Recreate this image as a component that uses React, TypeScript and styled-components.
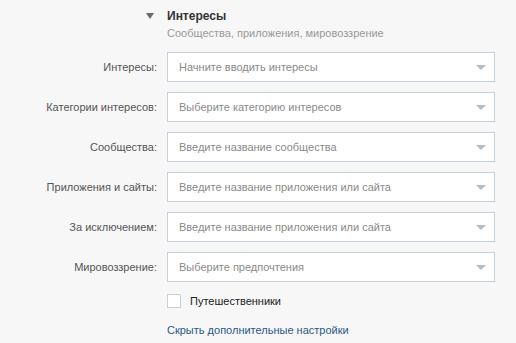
import * as React from 'react';
import styled, {createGlobalStyle} from 'styled-components';

const GlobalStyle = createGlobalStyle`
  html, body {
    margin: 0;
    padding: 0;
    background: #f7f7f7;
  }
  body {
    font-family: "Liberation Sans", Arial, sans-serif;
    font-size: 11px;
  }
`;

const Page = styled.div`
  width: 516px;
  height: 343px;
  padding-top: 8px;
  box-sizing: border-box;
  overflow: hidden;
`;

const Form = styled.div`
  display: grid;
  grid-template-columns: 157px 328px;
  column-gap: 10px;
  row-gap: 10px;
  align-items: center;
`;

const Header = styled.div`
  display: grid;
  grid-template-columns: 157px 328px;
  column-gap: 10px;
  margin-bottom: 11px;
`;

const Toggle = styled.div`
  justify-self: end;
  margin-right: 3px;
  margin-top: 5px;
  width: 0;
  height: 0;
  border-left: 4px solid transparent;
  border-right: 4px solid transparent;
  border-top: 6px solid #6b6b6b;
`;

const Title = styled.div`
  font-weight: bold;
  font-size: 12px;
  line-height: 16px;
  color: #333;
`;

const Subtitle = styled.div`
  color: #999;
  line-height: 16px;
  margin-top: 1px;
`;

const Label = styled.div`
  text-align: right;
  color: #555;
  line-height: 30px;
`;

const Select = styled.div`
  height: 30px;
  box-sizing: border-box;
  background: #fff;
  border: 1px solid #c5d0db;
  display: flex;
  align-items: center;
  padding: 0 8px 0 11px;
  color: #8a8a8a;
`;

const Placeholder = styled.span`
  flex: 1;
`;

const Arrow = styled.span`
  width: 0;
  height: 0;
  border-left: 5px solid transparent;
  border-right: 5px solid transparent;
  border-top: 5px solid #b4bcc6;
`;

const CheckRow = styled.label`
  grid-column: 2;
  display: flex;
  align-items: center;
  gap: 9px;
  color: #222;
  margin-top: 2px;
`;

const Box = styled.span`
  width: 14px;
  height: 14px;
  box-sizing: border-box;
  background: #fff;
  border: 1px solid #c5d0db;
`;

const Link = styled.a`
  grid-column: 2;
  color: #2a5885;
  text-decoration: none;
  margin-top: 6px;
`;

const rows = [
  ['Интересы:', 'Начните вводить интересы'],
  ['Категории интересов:', 'Выберите категорию интересов'],
  ['Сообщества:', 'Введите название сообщества'],
  ['Приложения и сайты:', 'Введите название приложения или сайта'],
  ['За исключением:', 'Введите название приложения или сайта'],
  ['Мировоззрение:', 'Выберите предпочтения'],
];

export default function App() {
  return (
    <Page>
      <GlobalStyle />
      <Header>
        <Toggle />
        <div>
          <Title>Интересы</Title>
          <Subtitle>Сообщества, приложения, мировоззрение</Subtitle>
        </div>
      </Header>
      <Form>
        {rows.map(([label, hint]) => (
          <React.Fragment key={label}>
            <Label>{label}</Label>
            <Select>
              <Placeholder>{hint}</Placeholder>
              <Arrow />
            </Select>
          </React.Fragment>
        ))}
        <CheckRow>
          <Box />
          Путешественники
        </CheckRow>
        <Link href="#">Скрыть дополнительные настройки</Link>
      </Form>
    </Page>
  );
}
